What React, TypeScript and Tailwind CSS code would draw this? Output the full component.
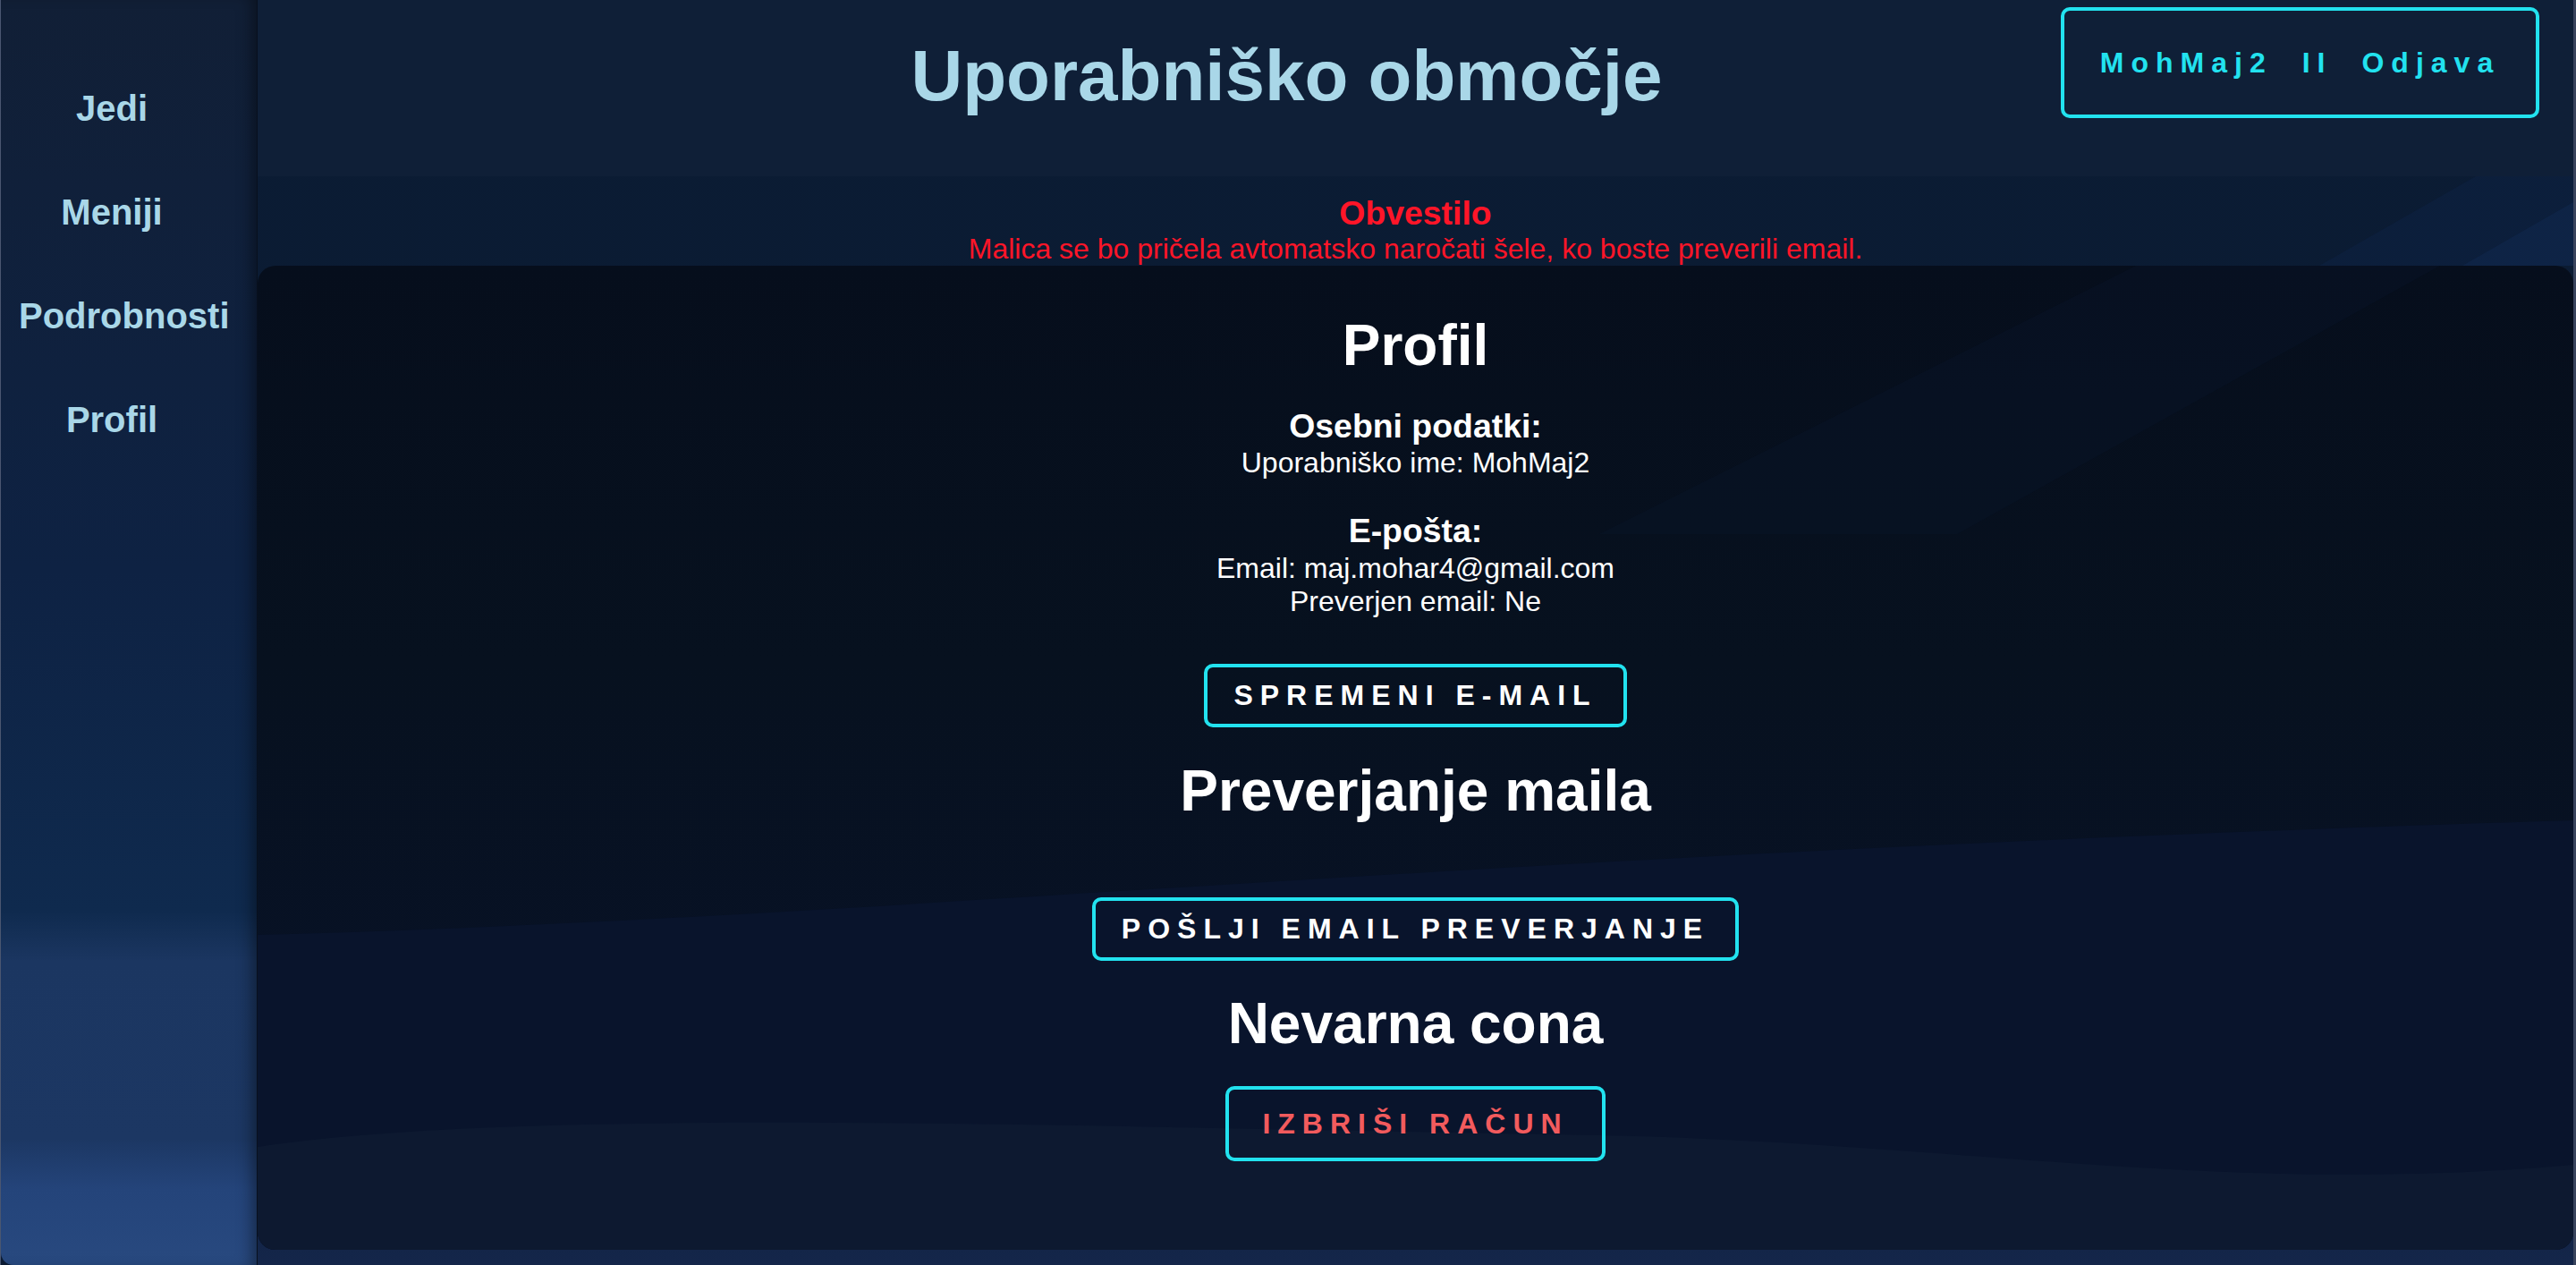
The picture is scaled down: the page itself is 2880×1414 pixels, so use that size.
import React from "react";

const navItems = ["Jedi", "Meniji", "Podrobnosti", "Profil"];

function OutlineButton({
  label,
  tone = "light",
  className = "",
}: {
  label: string;
  tone?: "light" | "danger";
  className?: string;
}) {
  return (
    <button
      className={
        "flex items-center justify-center border-[4px] border-[#22e2ef] rounded-[10px] bg-transparent text-[32px] leading-[37px] font-bold tracking-[8px] whitespace-nowrap " +
        (tone === "danger" ? "text-[#f25b5d] " : "text-white ") +
        className
      }
    >
      {label}
    </button>
  );
}

export default function App() {
  return (
    <div className="flex h-screen w-full overflow-hidden bg-[#0b1b33] border-l border-l-[#4a5670] border-r-[3px] border-r-[#39445d] font-['Liberation_Sans',Arial,sans-serif]">
      {/* Sidebar */}
      <aside className="relative w-[287px] shrink-0 rounded-bl-[14px] border-r border-r-[#08101e] bg-[linear-gradient(180deg,#111f36_0%,#0e2243_45%,#0f2a4e_72%,#1b3661_76%,#1c3763_90%,#24447a_94%,#28497f_100%)] shadow-[inset_-14px_0_18px_-10px_rgba(0,0,0,0.45)]">
        <nav className="ml-[20px] flex w-[208px] flex-col gap-[70px] pt-[98px] text-center">
          {navItems.map((item) => (
            <a
              key={item}
              className="block whitespace-nowrap text-[40px] leading-[46px] font-bold text-[#a9d7e8]"
            >
              {item}
            </a>
          ))}
        </nav>
      </aside>

      {/* Main */}
      <main className="relative flex flex-1 flex-col bg-[linear-gradient(180deg,#0b1c34_0%,#0b1a31_80%,#14264a_100%)]">
        {/* faint diagonal streaks, top right */}
        <svg
          className="pointer-events-none absolute inset-0 h-full w-full"
          viewBox="0 0 2589 1414"
          preserveAspectRatio="none"
        >
          <polygon points="2305,297 2480,197 2589,197 2589,297" fill="#0d2244" opacity="0.5" />
          <polygon points="2465,297 2589,226 2589,297" fill="#10284f" opacity="0.55" />
          <path d="M2589,140 C2570,160 2545,180 2520,197 L2589,197 Z" fill="#13274a" opacity="0.4" />
        </svg>

        {/* Header */}
        <header className="relative h-[197px] shrink-0 bg-[#0f1f37]">
          <div className="flex justify-center pr-[288px] pt-[39px]">
            <h1 className="text-[80px] leading-[92px] font-bold text-[#a9d7e8]">
              Uporabniško območje
            </h1>
          </div>
          <button className="absolute right-[38px] top-[8px] flex h-[124px] w-[535px] items-center justify-center gap-[33px] rounded-[10px] border-[4px] border-[#22e2ef] text-[32px] leading-[37px] font-bold tracking-[8px] text-[#22e2ef]">
            <span>MohMaj2</span>
            <span>II</span>
            <span>Odjava</span>
          </button>
        </header>

        {/* Notice */}
        <div className="relative flex flex-col items-center pt-[20px] text-[#ff1528]">
          <h3 className="text-[37.4px] leading-[43px] font-bold">Obvestilo</h3>
          <p className="text-[32px] leading-[37px]">
            Malica se bo pričela avtomatsko naročati šele, ko boste preverili email.
          </p>
        </div>

        {/* Card */}
        <section className="relative h-[1100px] shrink-0 overflow-hidden rounded-[20px] bg-[linear-gradient(180deg,#060e1c_0%,#07111f_40%,#08122a_100%)]">
          <svg
            className="pointer-events-none absolute inset-0 h-full w-full"
            viewBox="0 0 2589 1100"
            preserveAspectRatio="none"
          >
            <polygon points="2100,0 2440,0 1900,300 1500,300" fill="#0a1830" opacity="0.3" />
            <path d="M0,748 C700,730 1300,660 2589,620 L2589,1100 L0,1100 Z" fill="#09142c" />
            <path d="M0,985 C300,940 900,962 1500,972 C1900,980 2200,1040 2589,1005 L2589,1100 L0,1100 Z" fill="#0d1930" />
          </svg>

          <div className="relative flex flex-col items-center pt-[52px] text-white">
            <h1 className="text-[64px] leading-[74px] font-bold">Profil</h1>

            <h3 className="mt-[32px] text-[37.4px] leading-[43px] font-bold">Osebni podatki:</h3>
            <p className="mt-[1px] text-[32px] leading-[37px]">Uporabniško ime: MohMaj2</p>

            <h3 className="mt-[36px] text-[37.4px] leading-[43px] font-bold">E-pošta:</h3>
            <p className="mt-[2px] text-[32px] leading-[37px]">Email: maj.mohar4@gmail.com</p>
            <p className="text-[32px] leading-[37px]">Preverjen email: Ne</p>

            <OutlineButton label="SPREMENI E-MAIL" className="mt-[51px] h-[71px] px-[29px]" />

            <h1 className="mt-[34px] text-[64px] leading-[74px] font-bold">Preverjanje maila</h1>

            <OutlineButton label="POŠLJI EMAIL PREVERJANJE" className="mt-[82px] h-[71px] px-[29px]" />

            <h1 className="mt-[33px] text-[64px] leading-[74px] font-bold">Nevarna cona</h1>

            <OutlineButton label="IZBRIŠI RAČUN" tone="danger" className="mt-[33px] h-[84px] px-[37px]" />
          </div>
        </section>
      </main>
    </div>
  );
}
